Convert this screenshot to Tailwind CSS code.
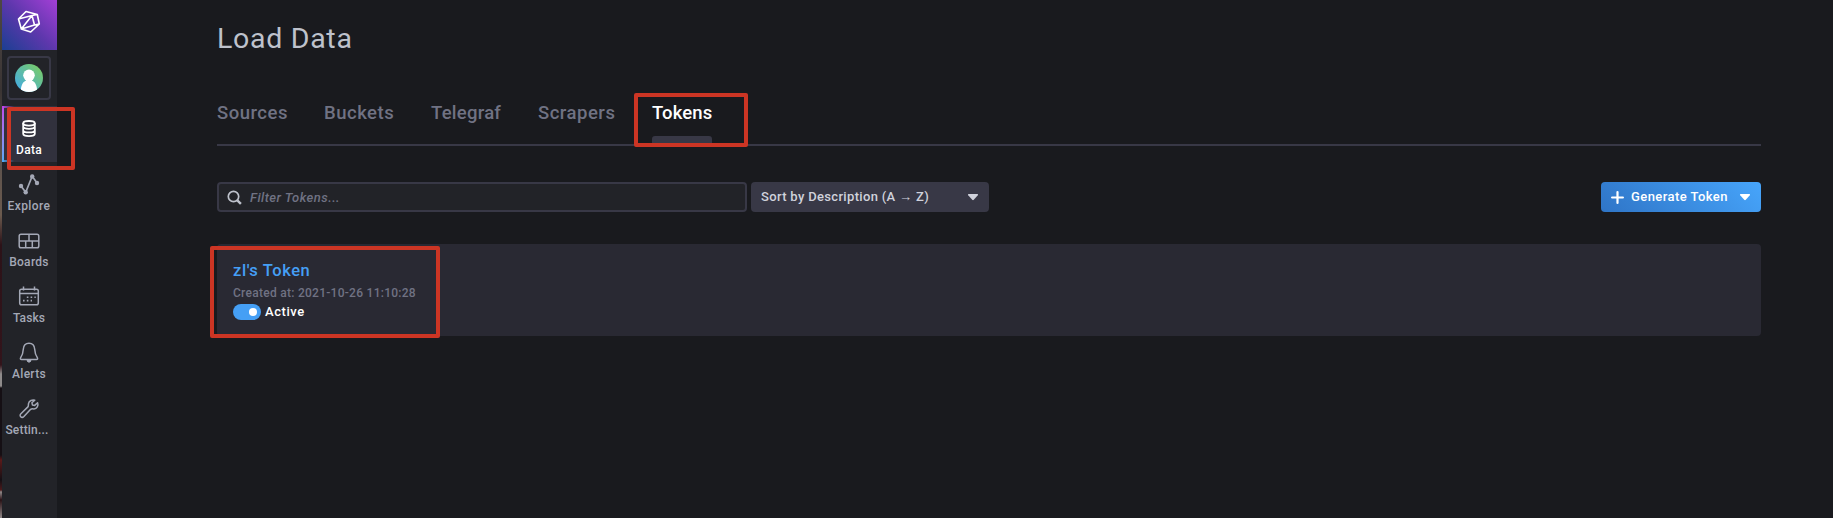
<!DOCTYPE html>
<html lang="en">
<head>
<meta charset="utf-8">
<title>Load Data</title>
<script src="https://cdn.jsdelivr.net/npm/@tailwindcss/browser@4"></script>
</head>
<body class="w-[1833px] h-[518px] overflow-hidden bg-[#191a1e] font-[Roboto,sans-serif] relative flex">
<div class="w-[2px] shrink-0 bg-[linear-gradient(180deg,#4d4745_0px,#3a3433_90px,#59504c_150px,#6b5a4e_215px,#2c1218_245px,#33141b_365px,#8f8b8b_374px,#8f8b8b_386px,#150f14_388px,#150f14_455px,#5a1a1a_460px,#150f14_480px,#4d1a1c_490px,#908888_492px,#2a1216_500px,#908888_518px)]"></div>
<nav class="w-[55px] shrink-0 bg-[#222328] flex flex-col items-stretch text-[#a4a8b6] text-xs font-medium">
  <div class="h-[50px] shrink-0 bg-[linear-gradient(45deg,#1b3f92_0%,#5d37ac_50%,#a33fd6_100%)] flex justify-center pt-[10px] pr-px">
    <svg class="w-[24px] h-[24px]" viewBox="0 0 24 24" fill="none" stroke="#fff" stroke-width="1.6" stroke-linejoin="round"><path d="M9 1.500 20.300 4.500 22.300 14 13.700 22 4.300 19 1.500 9zM1.500 9 15 5.500 20.300 4.500M4.300 19 15 5.500 17.500 15zM17.500 15 22.300 14"/></svg>
  </div>
  <div class="mt-1.5 ml-[5px] w-11 h-11 shrink-0 rounded-[4px] border-2 border-[#383846] flex items-center justify-center">
    <svg class="w-7 h-7" viewBox="0 0 28 28"><defs><linearGradient id="av" x1="0" y1="1" x2="1" y2="0"><stop offset="0" stop-color="#3fa9f0"/><stop offset="1" stop-color="#7ecf5a"/></linearGradient><clipPath id="c"><circle cx="14" cy="14" r="14"/></clipPath></defs><circle cx="14" cy="14" r="14" fill="url(#av)"/><g clip-path="url(#c)" fill="#fff"><circle cx="14" cy="11.300" r="5.800"/><path d="M11 14h6v2.500c3.300 1.500 5.200 5 5.200 11.500H5.800c0-6.500 1.900-10 5.200-11.500z"/></g></svg>
  </div>
  <a class="mt-1.5 h-14 shrink-0 bg-[#31313d] text-white flex flex-col items-center pt-[11px] pr-px relative">
    <span class="absolute left-0 top-0 w-[2px] h-full bg-linear-to-b from-[#be45ea] to-[#4fa8f5]"></span>
    <span class="absolute left-0 top-0 w-3 h-[2px] bg-linear-to-r from-[#be45ea] to-transparent"></span>
    <span class="absolute left-0 bottom-0 w-3 h-[2px] bg-linear-to-r from-[#4fa8f5] to-transparent"></span>
    <svg class="w-6 h-6" viewBox="0 0 24 24" fill="none" stroke="currentColor" stroke-width="1.800"><ellipse cx="12" cy="6.300" rx="5.800" ry="2.300"/><path d="M6.200 6v10.800c0 1.400 2.500 2.300 5.800 2.300s5.800-.9 5.800-2.300V6M6.200 9.600c0 1.300 2.500 2.200 5.800 2.200s5.800-.9 5.800-2.200M6.200 13.200c0 1.300 2.500 2.200 5.800 2.200s5.800-.9 5.800-2.200"/></svg>
    <span class="mt-px leading-4 tracking-[0.3px]">Data</span>
  </a>
  <a class="h-14 shrink-0 flex flex-col items-center pt-[11px] pr-px">
    <svg class="w-6 h-6" viewBox="0 0 24 24" fill="none" stroke="currentColor" stroke-width="1.700"><path d="M4 13l4.700 6.300 6.500-16 5 7"/><g fill="currentColor" stroke="none"><circle cx="4" cy="13" r="2.200"/><circle cx="8.700" cy="19.300" r="2.200"/><circle cx="15.200" cy="3.500" r="2.200"/><circle cx="20" cy="10" r="2.200"/></g></svg>
    <span class="mt-px leading-4 tracking-[0.400px]">Explore</span>
  </a>
  <a class="h-14 shrink-0 flex flex-col items-center pt-[11px] pr-px">
    <svg class="w-6 h-6" viewBox="0 0 24 24" fill="none" stroke="currentColor" stroke-width="1.500"><rect x="2.200" y="5.200" width="19.600" height="13.600" rx="1.800"/><path d="M2.200 12h19.600M12 5.200v6.800M8.700 12v6.800M15.300 12v6.800"/></svg>
    <span class="mt-px leading-4 tracking-[0.3px]">Boards</span>
  </a>
  <a class="h-14 shrink-0 flex flex-col items-center pt-[11px] pr-px">
    <svg class="w-6 h-6" viewBox="0 0 24 24" fill="none" stroke="currentColor" stroke-width="1.500"><rect x="2.700" y="4.200" width="18.600" height="15.600" rx="1.800"/><path d="M2.700 8.500h18.600M6.500 1.500v4M17.500 1.500v4"/><path stroke-width="1.600" stroke-dasharray="1.600 2.200" d="M9.800 12.200h9M6 15.600h9"/></svg>
    <span class="mt-px leading-4 tracking-[0.100px]">Tasks</span>
  </a>
  <a class="h-14 shrink-0 flex flex-col items-center pt-[11px] pr-px">
    <svg class="w-6 h-6" viewBox="0 0 24 24" fill="none" stroke="currentColor" stroke-width="1.500" stroke-linejoin="round"><path d="M12 2.200c-4 0-5.500 2.800-5.700 6-.3 4.500-1 6-2.500 8.200-.8 1.300-.4 2.200.8 2.200h14.800c1.200 0 1.600-.9.8-2.200-1.500-2.200-2.200-3.700-2.500-8.200-.2-3.200-1.700-6-5.700-6z"/><path d="M10 19.500h4l-1 1.500h-2z" fill="currentColor" stroke-width="1"/></svg>
    <span class="mt-px leading-4 tracking-[0.300px]">Alerts</span>
  </a>
  <a class="h-14 shrink-0 flex flex-col items-center pt-[11px] pr-px">
    <svg class="w-6 h-6" viewBox="0 0 24 24" fill="none" stroke="currentColor" stroke-width="1.500" stroke-linejoin="round"><path d="M17.800 3.200c-2.300-.9-5.800.5-6.300 3.500-.2 1.500 0 2.500-.6 3.200l-7 6.800c-1 1-1 2.200-.2 3s2.200.8 3.200-.2l6.500-7c.8-.8 2-.7 3.300-.6 3.300.2 5-3.500 3.900-6.200l-2.900 2.700-2.300-.5-.5-2.200z"/></svg>
    <span class="mt-px -ml-[4px] leading-4 tracking-[0.200px]">Settin...</span>
  </a>
</nav>
<main class="ml-40 w-[1544px] flex flex-col">
  <h1 class="mt-[21px] h-9 leading-9 text-[28.5px] text-[#bec2cc] font-normal tracking-[0.700px]">Load Data</h1>
  <div class="mt-[33px] h-14 border-b-2 border-[#383846] flex text-[18.5px] leading-[46px] font-medium text-[#707283]">
    <span class="w-[107px] tracking-[0.500px]">Sources</span><span class="w-[107px] tracking-[0.500px]">Buckets</span><span class="w-[107px] tracking-[0.250px]">Telegraf</span><span class="w-[114px] tracking-[0.500px]">Scrapers</span>
    <span class="w-[60px] text-white flex flex-col justify-between tracking-[0.100px]"><span>Tokens</span><span class="h-2 rounded-t-[3px] bg-[#383846]"></span></span>
  </div>
  <div class="mt-9 h-[30px] flex text-[13px] font-medium">
    <div class="w-[530px] border-2 border-[#383846] rounded-[4px] bg-[#222328] flex items-center pl-2 text-[#707283] italic">
      <svg class="w-[15px] h-[15px] mr-2" viewBox="0 0 15 15" fill="none" stroke="#bec2cc" stroke-width="1.700"><circle cx="6.500" cy="6.500" r="5.200"/><path d="M10.300 10.300l3.600 3.600" stroke-width="2.400"/></svg><span class="pt-px tracking-[0.450px]">Filter Tokens...</span>
    </div>
    <div class="ml-1 w-[238px] rounded-[4px] bg-[#383846] text-[#d0d2dc] flex items-center justify-between pl-[10px] pr-[11px]"><span class="tracking-[0.330px]">Sort by Description (A → Z)</span><svg class="w-[10px] h-[7px]" viewBox="0 0 10 7"><path fill="currentColor" d="M.5 0h9q.8.5.3 1.200L5.800 5.800q-.8.700-1.600 0L.2 1.200Q-.3.500.5 0z"/></svg></div>
    <div class="ml-auto w-40 rounded-[4px] bg-linear-45 from-[#2f75c7] to-[#47a5fb] text-white flex items-center pl-[10px] pr-[11px]"><svg class="w-[13px] h-[13px] mr-[7px]" viewBox="0 0 13 13" stroke="#fff" stroke-width="2.200" stroke-linecap="round"><path d="M6.500 1.100v10.800M1.100 6.500h10.800"/></svg><span class="tracking-[0.430px]">Generate Token</span><svg class="ml-auto w-[10px] h-[7px]" viewBox="0 0 10 7"><path fill="currentColor" d="M.5 0h9q.8.5.3 1.200L5.800 5.800q-.8.700-1.600 0L.2 1.200Q-.3.500.5 0z"/></svg></div>
  </div>
  <div class="mt-8 h-[92px] shrink-0 rounded-[4px] bg-[#292933] pl-4 pt-[15px] flex flex-col items-start">
    <div class="h-6 leading-6 text-[16.5px] font-medium text-[#459ff5] tracking-[0.580px]">zl's Token</div>
    <div class="mt-[2px] h-[17px] leading-[17px] text-xs font-medium text-[#707283] tracking-[0.270px]">Created at: 2021-10-26 11:10:28</div>
    <div class="mt-[2px] h-4 flex items-center gap-1 text-[13px] font-medium text-white"><span class="w-7 h-4 rounded-full bg-[#459ff5] flex items-center justify-end pr-1"><span class="w-2 h-2 rounded-full bg-white"></span></span><span class="tracking-[0.550px]">Active</span></div>
  </div>
</main>
<div class="absolute left-[7px] top-[107px] w-[68px] h-[63px] border-4 border-[#cc3524] rounded-[2px]"></div>
<div class="absolute left-[634px] top-[93px] w-[114px] h-[54px] border-4 border-[#cc3524] rounded-[2px]"></div>
<div class="absolute left-[210px] top-[246px] w-[230px] h-[92px] border-4 border-[#cc3524] rounded-[2px]"></div>
</body>
</html>
